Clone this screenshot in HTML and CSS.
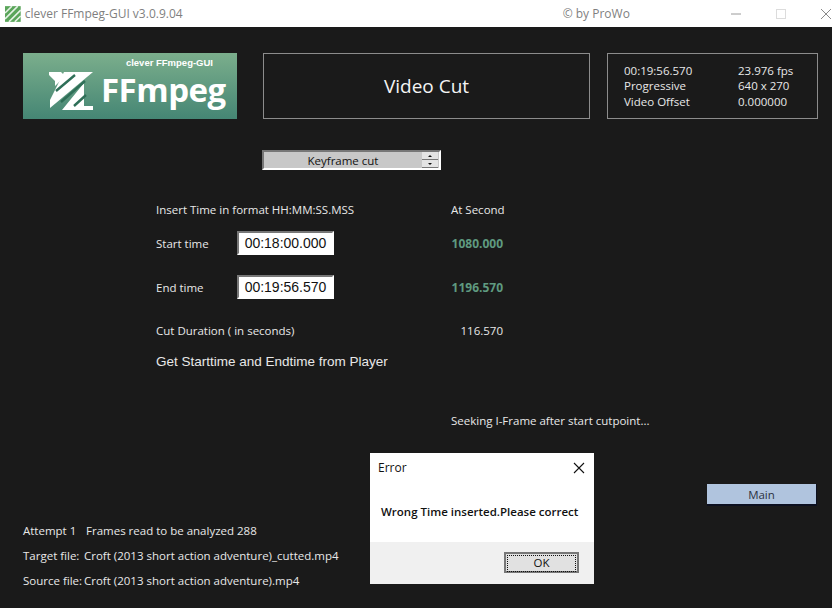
FILE: index.html
```html
<!DOCTYPE html>
<html>
<head>
  <title>clever FFmpeg-GUI</title>
  <link rel="stylesheet" href="styles.css">
</head>
<body>
  <div class="window">
    <div class="titlebar">
      <svg class="app_icon" width="16" height="16" viewBox="0 0 16 16">
        <rect width="16" height="16" fill="#5aa55a"/>
        <path d="M0 7 L7 0 M0 13 L13 0 M4 16 L16 4 M10 16 L16 10" stroke="#e6f2e6" stroke-width="1.6"/>
      </svg>
      <span class="app_title">clever FFmpeg-GUI v3.0.9.04</span>
      <span class="app_by">© by ProWo</span>
      <div class="window_buttons">
        <svg width="12" height="12" viewBox="0 0 12 12"><path d="M1 6 H11" stroke="#9a9a9a"/></svg>
        <svg width="12" height="12" viewBox="0 0 12 12"><rect x="1.5" y="1.5" width="9" height="9" fill="none" stroke="#dcdcdc"/></svg>
        <svg width="12" height="12" viewBox="0 0 12 12"><path d="M1 1 L11 11 M11 1 L1 11" stroke="#8a8a8a"/></svg>
      </div>
    </div>

    <div class="main">
      <div class="top_row">
        <div class="logo">
          <span class="logo_small">clever FFmpeg-GUI</span>
          <div class="logo_row">
            <svg class="logo_mark" width="46" height="42" viewBox="0 0 46 42">
              <path d="M1 3 H13 L17 7 L7 17 V12 L1 6 Z" fill="#fff"/>
              <path d="M16 3 H45 L2 39 V31 Z" fill="#fff"/>
              <path d="M36 14 V37 H45 V41 H14 Z" fill="#fff"/>
              <path d="M8 22 L27 6 M13 33 L37 12 M26 37 L38 26" stroke="#2f6f58" stroke-width="2.4"/>
            </svg>
            <span class="logo_text">FFmpeg</span>
          </div>
        </div>
        <div class="title_box">Video Cut</div>
        <div class="info_box">
          <span>00:19:56.570</span><span>23.976 fps</span>
          <span>Progressive</span><span>640 x 270</span>
          <span>Video Offset</span><span>0.000000</span>
        </div>
      </div>

      <div class="cut_select">
        <span class="cut_value">Keyframe cut</span>
        <div class="spin">
          <div class="spin_btn"><i class="arrow_up"></i></div>
          <div class="spin_btn"><i class="arrow_down"></i></div>
        </div>
      </div>

      <div class="time_form">
        <div class="wide">Insert Time in format HH:MM:SS.MSS</div>
        <div class="at_second">At Second</div>

        <div>Start time</div>
        <div class="time_input">00:18:00.000</div>
        <div class="seconds">1080.000</div>

        <div>End time</div>
        <div class="time_input">00:19:56.570</div>
        <div class="seconds">1196.570</div>

        <div class="wide">Cut Duration ( in seconds)</div>
        <div class="duration">116.570</div>
      </div>

      <div class="from_player">Get Starttime and Endtime from Player</div>
      <div class="seeking">Seeking I-Frame after start cutpoint...</div>

      <button class="main_button" type="button">Main</button>

      <div class="status">
        <span>Attempt 1</span><span class="frames">Frames read to be analyzed 288</span>
        <span>Target file:</span><span>Croft (2013 short action adventure)_cutted.mp4</span>
        <span>Source file:</span><span>Croft (2013 short action adventure).mp4</span>
      </div>
    </div>

    <div class="dialog">
      <div class="dialog_head">
        <span>Error</span>
        <svg width="12" height="12" viewBox="0 0 12 12"><path d="M1 1 L11 11 M11 1 L1 11" stroke="#111" stroke-width="1.1"/></svg>
      </div>
      <div class="dialog_msg">Wrong Time inserted.Please correct</div>
      <div class="dialog_foot">
        <button class="ok_button" type="button"><span>OK</span></button>
      </div>
    </div>
  </div>
</body>
</html>
```

FILE: styles.css
```css
body {
  margin: 0;
  background-color: #1a1a1a;
  font-family: "Open Sans", "Noto Sans", sans-serif;
  font-size: 11.5px;
  color: #e8e8e8;
}

.window {
  position: relative;
  width: 832px;
  height: 608px;
  overflow: hidden;
}

.titlebar {
  display: flex;
  align-items: center;
  height: 27px;
  background-color: #fff;
  color: #7f7f7f;
  font-size: 12px;
}
.app_icon {
  margin-left: 5px;
}
.app_title {
  margin-left: 4px;
  width: 548px;
}
.app_by {
  width: 146px;
}
.window_buttons {
  display: flex;
  gap: 33px;
  margin-left: 24px;
}

.main {
  display: flex;
  flex-direction: column;
  height: 581px;
}

.top_row {
  display: flex;
  margin: 26px 0 0 23px;
  height: 66px;
}

.logo {
  width: 214px;
  height: 66px;
  background: linear-gradient(#7bae8c, #458674);
  color: #fff;
  box-sizing: border-box;
  padding: 4px 0 0 25px;
}
.logo_small {
  display: block;
  margin-right: 24px;
  text-align: right;
  font-family: "Liberation Sans", sans-serif;
  font-weight: bold;
  font-size: 9.5px;
}
.logo_row {
  display: flex;
  align-items: center;
  margin-top: 0;
}
.logo_text {
  margin-left: 7px;
  font-family: "Open Sans", sans-serif;
  font-weight: 700;
  font-size: 33px;
  line-height: 44px;
  letter-spacing: -0.5px;
}

.title_box {
  display: flex;
  align-items: center;
  justify-content: center;
  width: 327px;
  margin-left: 26px;
  box-sizing: border-box;
  border: 1px solid #8c8c8c;
  font-size: 19px;
  color: #f4f4f4;
}

.info_box {
  display: grid;
  grid-template-columns: 114px auto;
  grid-auto-rows: 15.5px;
  align-content: center;
  width: 211px;
  height: 66px;
  margin-left: 17px;
  padding-left: 16px;
  box-sizing: border-box;
  border: 1px solid #8c8c8c;
}

.cut_select {
  display: flex;
  align-items: center;
  width: 179px;
  height: 20px;
  margin: 31px 0 0 262px;
  box-sizing: border-box;
  border: 2px solid #777;
  border-right-color: #fff;
  border-bottom-color: #fff;
  background-color: #c8c8c8;
  color: #111;
}
.cut_value {
  flex: 1;
  text-align: center;
}
.spin {
  display: flex;
  flex-direction: column;
  width: 16px;
  margin-right: 1px;
}
.spin_btn {
  display: flex;
  align-items: center;
  justify-content: center;
  height: 7px;
  background-color: #e4e4e4;
  border-bottom: 1px solid #777;
}
.arrow_up, .arrow_down {
  width: 0;
  height: 0;
  border-left: 2px solid transparent;
  border-right: 2px solid transparent;
}
.arrow_up {
  border-bottom: 2px solid #111;
}
.arrow_down {
  border-top: 2px solid #111;
}

.time_form {
  display: grid;
  grid-template-columns: 81px 214px 52px;
  grid-template-rows: 34px 34px 54px 32px;
  align-items: center;
  margin: 22px 0 0 156px;
}
.wide {
  grid-column: 1 / 3;
}
.at_second {
  white-space: nowrap;
}
.time_input {
  width: 97px;
  height: 24px;
  box-sizing: border-box;
  border: 2px solid #777;
  border-right-color: #fff;
  border-bottom-color: #fff;
  background-color: #fff;
  color: #111;
  font-family: "Liberation Sans", sans-serif;
  font-size: 14px;
  line-height: 20px;
  text-align: center;
}
.seconds {
  justify-self: end;
  color: #5f9a80;
  font-weight: 700;
  font-size: 12px;
}
.duration {
  justify-self: end;
}

.from_player {
  margin: 8px 0 0 156px;
  font-family: "Liberation Sans", sans-serif;
  font-size: 13.5px;
  line-height: 16px;
}

.seeking {
  margin: 43px 0 0 451px;
  line-height: 16px;
}

.main_button {
  width: 110px;
  height: 22px;
  margin: 55px 0 0 707px;
  padding: 0;
  box-sizing: border-box;
  border: none;
  border-right: 1px solid #0c1020;
  border-bottom: 2px solid #0c1020;
  background-color: #b0c4de;
  color: #2c3242;
  font: inherit;
}

.status {
  display: grid;
  grid-template-columns: 61px auto;
  grid-auto-rows: 25px;
  align-items: center;
  margin: 12px 0 0 23px;
}
.frames {
  padding-left: 2px;
}

.dialog {
  position: absolute;
  left: 370px;
  top: 453px;
  width: 224px;
  height: 131px;
  display: flex;
  flex-direction: column;
  background-color: #fff;
  color: #111;
}
.dialog_head {
  display: flex;
  align-items: center;
  justify-content: space-between;
  height: 29px;
  padding: 0 9px 0 8px;
  font-size: 12px;
}
.dialog_msg {
  flex: 1;
  padding: 22px 0 0 11px;
  font-weight: 600;
  font-size: 11.5px;
}
.dialog_foot {
  display: flex;
  justify-content: flex-end;
  height: 42px;
  padding: 10px 15px 0 0;
  box-sizing: border-box;
  background-color: #f0f0f0;
}
.ok_button {
  width: 75px;
  height: 21px;
  padding: 1px;
  box-sizing: border-box;
  border: 2px solid #777;
  background-color: #e1e1e1;
  font: inherit;
  color: #111;
}
.ok_button span {
  display: block;
  height: 15px;
  line-height: 14px;
  border: 1px dotted #111;
}
```
